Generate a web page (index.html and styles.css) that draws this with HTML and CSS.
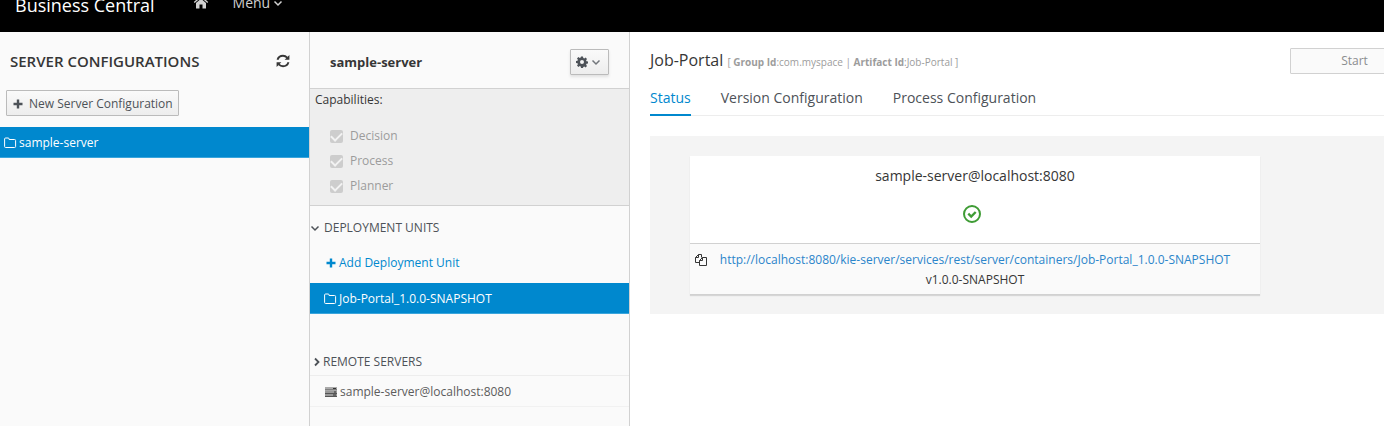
FILE: index.html
```html
<!DOCTYPE html>
<html lang="en">
<head>
<meta charset="utf-8">
<title>Business Central</title>
<link rel="stylesheet" href="styles.css">
</head>
<body>
<svg class="sprite" aria-hidden="true">
  <symbol id="plus" viewBox="0 0 10 10"><path d="M3.8 .5h2.4v3.3h3.3v2.4H6.200v3.300H3.800V6.200H.5V3.800h3.300z" fill="currentColor"/></symbol>
  <symbol id="folder" viewBox="0 0 13 12"><path d="M.6 9.500V2q0-1 1-1h2.500q1 0 1 1v.500H10.600q1 0 1 1v6q0 1-1 1H1.600q-1 0-1-1z" fill="none" stroke="currentColor"/></symbol>
  <symbol id="down" viewBox="0 0 10 10"><path d="M1.500 3.500L5 7l3.500-3.500" fill="none" stroke="currentColor" stroke-width="1.500"/></symbol>
  <symbol id="right" viewBox="0 0 8 10"><path d="M2 1.500L5.500 5 2 8.500" fill="none" stroke="currentColor" stroke-width="1.800"/></symbol>
</svg>
<header class="masthead">
  <span class="brand">Business Central</span>
  <a class="home" href="#" aria-label="Home"><svg class="icon-home" viewBox="0 0 16 14"><path d="M8 .5L.8 7l.9 1L8 2.500 14.300 8l.9-1-2.200-2V1.500h-2v1.700z M8 3.700L3 8v5.500h3.500V9.500h3v4H13V8z" fill="currentColor"/></svg></a>
  <button class="menu" type="button">Menu <svg class="icon-s"><use href="#down"/></svg></button>
</header>
<div class="layout">
  <aside class="sidebar">
    <div class="sidebar-head">
      <h1 class="sidebar-title">SERVER CONFIGURATIONS</h1>
      <button class="refresh" type="button" aria-label="Refresh"><svg class="icon-refresh" viewBox="0 0 14 14"><path d="M1.500 5.800C2.300 3.300 4.400 1.800 7 1.800c1.700 0 3.100.7 4.200 1.800M12.500 8.200C11.700 10.700 9.600 12.200 7 12.200c-1.700 0-3.100-.7-4.200-1.800" fill="none" stroke="currentColor" stroke-width="1.900"/><path d="M13.400 1v4.800H8.600zM.6 13V8.200h4.800z" fill="currentColor"/></svg></button>
    </div>
    <button class="btn new-server" type="button"><svg class="icon-s"><use href="#plus"/></svg>New Server Configuration</button>
    <a class="row selected server-row" href="#"><svg class="icon-folder"><use href="#folder"/></svg>sample-server</a>
  </aside>
  <section class="server">
    <div class="server-head">
      <h2 class="server-title">sample-server</h2>
      <button class="btn gear" type="button" aria-label="Settings"><svg class="icon-m" viewBox="0 0 12 12"><path fill-rule="evenodd" d="M5 .5h2l.3 1.500 1 .4 1.300-.9 1.400 1.400-.9 1.300.4 1 1.500.3v2l-1.500.3-.4 1 .9 1.300-1.400 1.400-1.300-.9-1 .4L7 12H5l-.3-1.500-1-.4-1.300.9L1 9.600l.9-1.300-.4-1L0 7V5l1.500-.3.4-1L1 2.400 2.400 1l1.300.9 1-.4zM6 4a2 2 0 1 0 0 4 2 2 0 0 0 0-4z" fill="currentColor"/></svg><svg class="icon-s"><use href="#down"/></svg></button>
    </div>
    <fieldset class="capabilities" disabled>
      <legend class="legend">Capabilities:</legend>
      <label class="check"><input class="box" type="checkbox" checked disabled>Decision</label>
      <label class="check"><input class="box" type="checkbox" checked disabled>Process</label>
      <label class="check"><input class="box" type="checkbox" checked disabled>Planner</label>
    </fieldset>
    <button class="section units" type="button"><svg class="icon-s"><use href="#down"/></svg>DEPLOYMENT UNITS</button>
    <a class="add" href="#"><svg class="icon-s"><use href="#plus"/></svg>Add Deployment Unit</a>
    <a class="row selected unit-row" href="#"><svg class="icon-folder"><use href="#folder"/></svg>Job-Portal_1.0.0-SNAPSHOT</a>
    <button class="section remote" type="button"><svg class="icon-right"><use href="#right"/></svg>REMOTE SERVERS</button>
    <a class="row remote-row" href="#"><svg class="icon-folder" viewBox="0 0 13 12"><path d="M0 1h12v3H0z" fill="#aaa"/><path d="M0 4h12M0 7.500h12M0 10.500h12" stroke="#555"/><path d="M0 5h12v2H0zM0 8h12v2H0z" fill="#999"/><path d="M8 2h3v1H8zM9 5.500h2v1H9zM8 8.500h3v1H8z" fill="#333"/></svg>sample-server@localhost:8080</a>
  </section>
  <main class="content">
    <div class="content-head">
      <h2 class="portal">Job-Portal <small class="ids">[ <b>Group Id</b>:com.myspace | <b>Artifact Id</b>:Job-Portal ]</small></h2>
      <button class="btn start" type="button" disabled>Start</button>
    </div>
    <nav class="tabs">
      <a class="tab active" href="#">Status</a>
      <a class="tab" href="#">Version Configuration</a>
      <a class="tab" href="#">Process Configuration</a>
    </nav>
    <div class="well">
      <article class="card">
        <div class="card-body">
          <h3 class="card-title">sample-server@localhost:8080</h3>
          <svg class="icon-ok" viewBox="0 0 20 20"><circle cx="10" cy="10" r="8" fill="none" stroke="currentColor" stroke-width="2"/><path d="M6.300 9.700L9.200 12.500 13.700 8" fill="none" stroke="currentColor" stroke-width="2.400"/></svg>
        </div>
        <div class="card-foot">
          <button class="copy" type="button" aria-label="Copy"><svg class="icon-copy" viewBox="0 0 14 14"><path d="M5 9.500H1.500V4.500L4.500 1.500H7.500v3M1.500 4.500h3v-3M5.500 12.500V7.500L8.500 4.500h4v8zM5.500 7.500h3v-3" fill="none" stroke="currentColor"/></svg></button>
          <div class="endpoint"><a class="link" href="#">http://localhost:8080/kie-server/services/rest/server/containers/Job-Portal_1.0.0-SNAPSHOT</a><span>v1.0.0-SNAPSHOT</span></div>
        </div>
      </article>
    </div>
  </main>
</div>
</body>
</html>
```
FILE: styles.css
```css
* { box-sizing: border-box; }
body { margin: 0; font: 12px/20px "Open Sans", sans-serif; color: #363636; background: #fff; overflow-x: hidden; }
a { color: inherit; text-decoration: none; }
button { font: inherit; color: inherit; background: none; border: 0; padding: 0; }
h1, h2, h3 { margin: 0; }
svg { flex: none; }
.sprite { display: none; }
.icon-s { width: 10px; height: 10px; }
.icon-m { width: 12px; height: 12px; }
.icon-right { width: 8px; height: 10px; }
.icon-folder { width: 13px; height: 12px; }
.icon-home { width: 16px; height: 14px; display: block; }
.icon-refresh { width: 14px; height: 14px; display: block; }
.icon-copy { width: 14px; height: 14px; display: block; }
.icon-ok { width: 20px; height: 20px; display: block; margin-right: 7px; }

.masthead { height: 32px; overflow: hidden; display: flex; align-items: flex-end; padding: 0 15px 15px; background: #000; color: #d1d1d1; }
.brand { font-size: 18px; line-height: 24px; color: #fff; flex: none; }
.home { margin: 0 24px 8px 38px; }
.menu { display: flex; align-items: center; gap: 3px; font-size: 14px; line-height: 28px; }

.layout { display: grid; grid-template-columns: 310px 320px minmax(0, 1fr); min-height: calc(100vh - 32px); }
.sidebar, .server { background: #fafafa; border-right: 1px solid #d1d1d1; }
.sidebar-head { display: flex; justify-content: space-between; align-items: center; padding: 18px 19px 18px 10px; }
.sidebar-title { font-size: 15px; line-height: 22px; font-weight: 600; }
.btn { display: flex; align-items: center; border: 1px solid #bbb; border-radius: 1px; background: linear-gradient(#fafafa, #ededed); color: #4d5258; height: 26px; }
.new-server { margin: 0 0 11px 6px; padding: 1px 5px 0 6px; gap: 6px; }
.row { display: flex; align-items: center; gap: 2px; height: 31px; }
.selected { background: #0088ce; color: #fff; border-bottom: 1px solid #39a5dc; }
.server-row { padding: 1px 4px 0; }

.server-head { display: flex; justify-content: space-between; align-items: center; height: 57px; padding: 4px 20px 0; border-bottom: 1px solid #d1d1d1; }
.server-title { font-size: 13px; font-weight: 700; }
.gear { padding: 0 7px 0 5px; gap: 3px; box-shadow: 0 2px 3px rgba(0, 0, 0, .1); }
.gear .icon-s { color: #72767b; }
.capabilities { display: flex; flex-direction: column; gap: 5px; margin: 0; padding: 1px 20px 9px; border: 0; border-bottom: 1px solid #d1d1d1; background: #eee; }
.legend { float: left; padding: 0; margin: 0 0 11px -15px; }
.check { display: flex; align-items: center; gap: 7px; color: #9c9c9c; }
.box { appearance: none; width: 13px; height: 13px; margin: 0; border-radius: 2px; background: #cdcdcd; display: grid; place-items: center; }
.box::after { content: ""; width: 9px; height: 5px; border: solid #f2f2f2; border-width: 0 0 2px 2px; transform: translateY(-1px) rotate(-45deg); }
.section { display: flex; align-items: center; width: 100%; gap: 4px; color: #4d5258; font-weight: 500; }
.units { padding: 12px 0 0; }
.add { display: flex; align-items: center; gap: 3px; padding: 15px 16px 10px; color: #0088ce; }
.unit-row { padding: 1px 14px 0; }
.remote { padding: 38px 3px 3px; gap: 2px; border-bottom: 1px solid #ededed; }
.remote-row { padding: 1px 15px 0; color: #5c5c5c; border-bottom: 1px solid #f1f1f1; }

.content { padding: 15px 0 0 20px; overflow: hidden; }
.content-head { display: flex; justify-content: space-between; align-items: center; margin-right: -35px; }
.portal { font-size: 16px; line-height: 26px; font-weight: 400; white-space: nowrap; }
.ids { font-size: 10px; color: #9c9c9c; }
.start { width: 129px; justify-content: center; background: #fafafa; border-color: #d1d1d1; color: #8b8d8f; }
.tabs { display: flex; gap: 30px; margin-top: 7px; border-bottom: 1px solid #ededed; font-size: 14px; line-height: 32px; color: #4d5258; }
.tab { border-bottom: 2px solid transparent; margin-bottom: -1px; }
.active { color: #0088ce; border-color: #0088ce; }
.well { margin-top: 20px; padding: 20px 124px 19px 40px; background: #f4f4f4; }
.card { background: #fff; box-shadow: 0 1px 1px rgba(0, 0, 0, .12); }
.card-body { display: flex; flex-direction: column; align-items: center; gap: 18px; padding: 10px 0 19px; }
.card-title { font-size: 14px; font-weight: 400; }
.icon-ok { color: #3f9c35; }
.card-foot { display: flex; align-items: flex-start; gap: 4px; padding: 6px 22px 4px 4px; border: solid #d1d1d1; border-width: 1px 0; background: #fafafa; }
.copy { padding: 3px 0 0; }
.endpoint { display: flex; flex-direction: column; align-items: center; flex: 1; }
.link { color: #2b85ca; }
```
